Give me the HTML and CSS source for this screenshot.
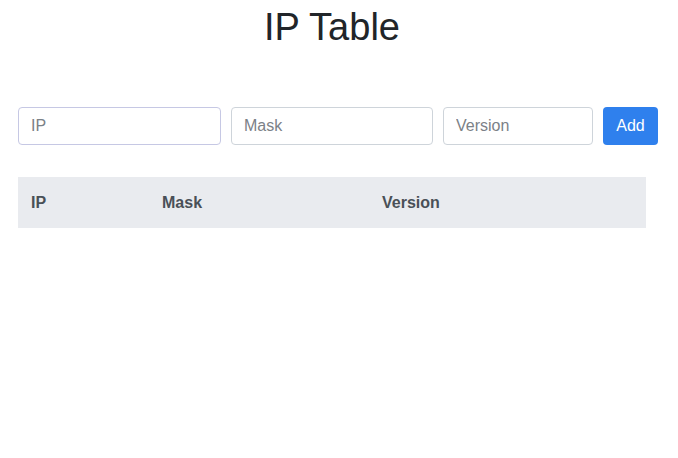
FILE: index.html
```html
<!DOCTYPE html>
<html>
<head>
<meta charset="utf-8">
<link rel="stylesheet" href="styles.css">
</head>
<body>
<div class="container">
  <h1 class="title">IP Table</h1>
  <form class="entry">
    <input class="field field-ip field-focus" type="text" placeholder="IP">
    <input class="field field-mask" type="text" placeholder="Mask">
    <input class="field field-version" type="text" placeholder="Version">
    <button class="btn-add" type="button">Add</button>
  </form>
  <table class="ip-table">
    <thead>
      <tr>
        <th class="col-ip">IP</th>
        <th class="col-mask">Mask</th>
        <th class="col-version">Version</th>
      </tr>
    </thead>
    <tbody></tbody>
  </table>
</div>
</body>
</html>
```
FILE: styles.css
```css
html, body {
  margin: 0;
  padding: 0;
  background: #ffffff;
}
body {
  font-family: "Liberation Sans", Arial, sans-serif;
  color: #212529;
  font-size: 16px;
}
.container {
  width: 628px;
  padding-left: 18px;
}
.title {
  margin: 5px 0 0;
  font-size: 38px;
  font-weight: 400;
  line-height: 44px;
  text-align: center;
  color: #212529;
}
.entry {
  display: flex;
  gap: 10px;
  width: 640px;
  margin-top: 58px;
}
.field {
  box-sizing: border-box;
  height: 38px;
  padding: 6px 12px;
  border: 1px solid #ced4da;
  border-radius: 4px;
  font-family: "Liberation Sans", Arial, sans-serif;
  font-size: 16px;
  color: #495057;
  background: #fff;
  outline: none;
}
.field::placeholder {
  color: #7b8187;
}
.field-focus {
  border-color: #c6c8e4;
}
.field-ip { width: 203px; }
.field-mask { width: 202px; }
.field-version { width: 150px; }
.btn-add {
  box-sizing: border-box;
  width: 55px;
  height: 38px;
  border: none;
  border-radius: 4px;
  background: #2f80ed;
  color: #fff;
  font-family: "Liberation Sans", Arial, sans-serif;
  font-size: 16px;
  padding: 0;
}
.ip-table {
  margin-top: 32px;
  width: 628px;
  border-collapse: collapse;
}
.ip-table th {
  background: #e9ebef;
  color: #495057;
  font-weight: 700;
  text-align: left;
  height: 51px;
  padding: 0 13px;
  box-sizing: border-box;
}
.col-ip { width: 131px; }
.col-mask { width: 220px; }
```
